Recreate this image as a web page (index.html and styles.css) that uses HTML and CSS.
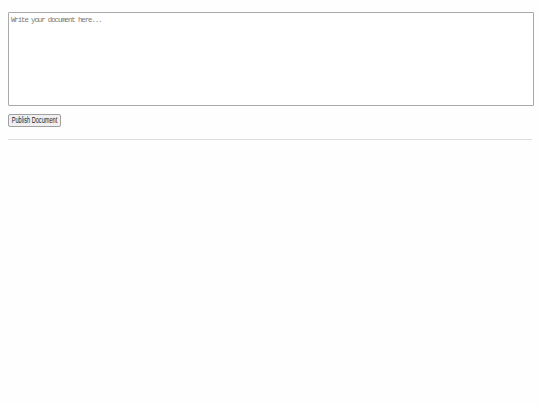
FILE: index.html
```html
<!DOCTYPE html>
<html>
<head>
<meta charset="utf-8">
<link rel="stylesheet" href="styles.css">
</head>
<body>
<div class="editor">
  <textarea class="doc" placeholder="Write your document here..."></textarea>
  <div class="actions">
    <button class="publish"><span class="label">Publish Document</span></button>
  </div>
  <hr class="divider">
</div>
</body>
</html>
```
FILE: styles.css
```css
html, body { margin: 0; padding: 0; background: #fefefe; }
.editor { padding: 12px 6px 0 8px; display: flex; flex-direction: column; }
.doc {
  box-sizing: border-box;
  width: 526px;
  height: 94px;
  margin: 0;
  padding: 3px 2px;
  border: 1px solid #a9a9a9;
  border-radius: 1px;
  font-family: "Liberation Mono", monospace;
  font-size: 7.5px;
  letter-spacing: -1.15px;
  resize: none;
  background: #fff;
}
.doc::placeholder { color: #7a7a7a; }
.actions { margin-top: 8px; display: flex; }
.publish {
  box-sizing: border-box;
  height: 13px;
  width: 53px;
  padding: 0;
  display: flex;
  align-items: center;
  justify-content: center;
  overflow: visible;
  white-space: nowrap;
  color: #1a1a1a;
  background: #f0f0f0;
  border: 1px solid #a0a0a0;
  border-radius: 2px;
}
.label {
  display: inline-block;
  font-family: "Liberation Sans", Arial, sans-serif;
  font-size: 8.5px;
  line-height: 1;
  transform: scaleX(0.66);
  flex: none;
}
.divider {
  width: 524px;
  margin: 12px 0 0 0;
  border: none;
  border-top: 1px solid #ddd;
  height: 0;
}
```
